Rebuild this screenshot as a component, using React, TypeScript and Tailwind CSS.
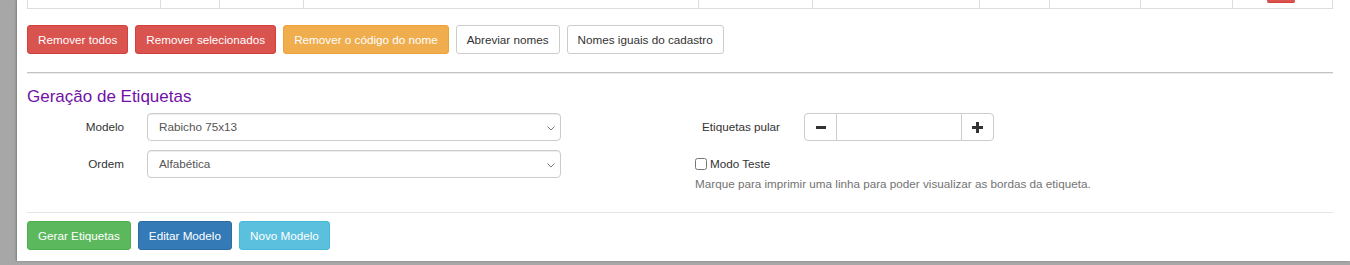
import React from "react";

const font = { fontFamily: '"Liberation Sans", Arial, sans-serif' };

function Btn({ children, cls }: { children: React.ReactNode; cls: string }) {
  return (
    <button
      type="button"
      className={`h-[29px] px-[10px] text-[11.7px] leading-[17px] rounded-[3px] border ${cls}`}
    >
      {children}
    </button>
  );
}

function Chevron() {
  return (
    <svg width="8" height="5" viewBox="0 0 8 5" className="absolute right-[5px] top-[12px]">
      <path d="M0.5 0.5 L4 4 L7.5 0.5" fill="none" stroke="#777" strokeWidth="1" />
    </svg>
  );
}

function Select({ value }: { value: string }) {
  return (
    <div className="relative w-[414px] h-[28px] border border-[#ccc] rounded-[4px] bg-white shadow-[inset_0_1px_1px_rgba(0,0,0,0.075)] flex items-center pl-[11px] text-[11.7px] text-[#555]">
      {value}
      <Chevron />
    </div>
  );
}

export default function App() {
  const cols = [133, 59, 84, 395, 114, 167, 70, 91, 92, 101];
  return (
    <div style={font} className="w-[1350px] h-[265px] bg-[#a7a7a7] pl-[17px] pb-[4px] overflow-hidden">
      <div className="h-[261px] bg-white pl-[10px] pr-[17px] shadow-[-1px_0_2px_rgba(0,0,0,0.25)]">
        {/* table tail */}
        <div className="grid grid-cols-[133px_59px_84px_395px_114px_167px_70px_91px_92px_101px] h-[9px] border-b border-[#ddd]">
          {cols.map((_, i) => (
            <div key={i} className={`h-full border-l border-[#ddd] ${i === cols.length - 1 ? "border-r flex justify-center" : ""}`}>
              {i === cols.length - 1 && (
                <div className="w-[28px] h-[3px] bg-[#d9534f] border-b border-[#d43f3a] rounded-b-[2px] -ml-[3px]" />
              )}
            </div>
          ))}
        </div>

        {/* action buttons */}
        <div className="flex gap-[7px] mt-[16px]">
          <Btn cls="bg-[#d9534f] border-[#d43f3a] text-white">Remover todos</Btn>
          <Btn cls="bg-[#d9534f] border-[#d43f3a] text-white">Remover selecionados</Btn>
          <Btn cls="bg-[#f0ad4e] border-[#eea236] text-white">Remover o código do nome</Btn>
          <Btn cls="bg-white border-[#ccc] text-[#333]">Abreviar nomes</Btn>
          <Btn cls="bg-white border-[#ccc] text-[#333]">Nomes iguais do cadastro</Btn>
        </div>

        <div className="mt-[18px] h-[2px] border-t border-[#c4c4c4] border-b border-b-[#ececec]" />

        <div className="mt-[14px] text-[17px] leading-[18px] text-[#7110a8]">Geração de Etiquetas</div>

        <div className="flex mt-[7px]">
          {/* left form */}
          <div className="w-[534px] flex flex-col gap-[9px]">
            <div className="flex items-center">
              <div className="w-[97px] text-right text-[11.7px] text-[#333]">Modelo</div>
              <div className="ml-[23px]">
                <Select value="Rabicho 75x13" />
              </div>
            </div>
            <div className="flex items-center">
              <div className="w-[97px] text-right text-[11.7px] text-[#333]">Ordem</div>
              <div className="ml-[23px]">
                <Select value="Alfabética" />
              </div>
            </div>
          </div>

          {/* right form */}
          <div className="ml-[134px] flex flex-col">
            <div className="flex items-center h-[28px]">
              <div className="w-[85px] text-right text-[11.7px] text-[#333]">Etiquetas pular</div>
              <div className="ml-[24px] flex h-[28px]">
                <div className="w-[33px] h-full border border-[#ccc] rounded-l-[4px] flex items-center justify-center bg-white">
                  <svg width="10" height="3" viewBox="0 0 10 3">
                    <rect x="0" y="0" width="10" height="3" fill="#333" />
                  </svg>
                </div>
                <div className="w-[124px] h-full border-y border-[#ccc] bg-white" />
                <div className="w-[33px] h-full border border-[#ccc] rounded-r-[4px] flex items-center justify-center bg-white">
                  <svg width="11" height="11" viewBox="0 0 11 11">
                    <rect x="0" y="4" width="11" height="3" fill="#333" />
                    <rect x="4" y="0" width="3" height="11" fill="#333" />
                  </svg>
                </div>
              </div>
            </div>
            <div className="mt-[14px] flex items-center h-[17px]">
              <input type="checkbox" className="w-[12px] h-[12px] m-0" />
              <span className="ml-[3px] text-[11.7px] text-[#333]">Modo Teste</span>
            </div>
            <div className="mt-[3px] text-[11.7px] leading-[17px] text-[#737373]">
              Marque para imprimir uma linha para poder visualizar as bordas da etiqueta.
            </div>
          </div>
        </div>

        <div className="mt-[20px] border-t border-[#e5e5e5]" />

        <div className="flex gap-[7px] mt-[8px]">
          <Btn cls="bg-[#5cb85c] border-[#4cae4c] text-white">Gerar Etiquetas</Btn>
          <Btn cls="bg-[#337ab7] border-[#2e6da4] text-white">Editar Modelo</Btn>
          <Btn cls="bg-[#5bc0de] border-[#46b8da] text-white">Novo Modelo</Btn>
        </div>
      </div>
    </div>
  );
}
